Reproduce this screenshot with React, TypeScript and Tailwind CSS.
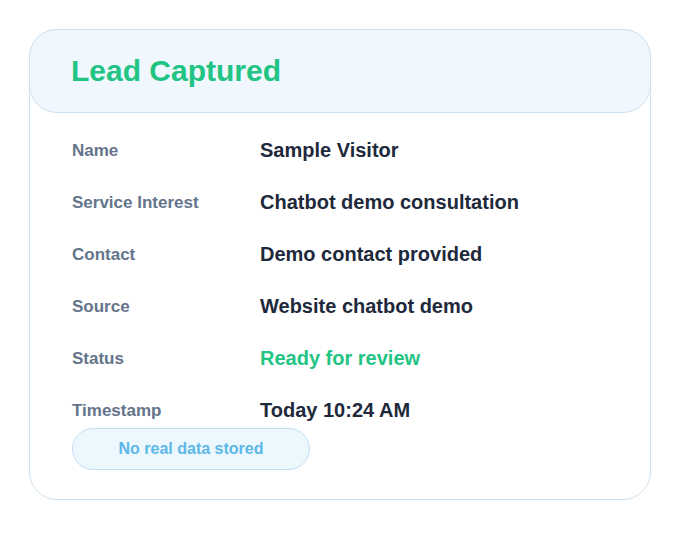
const rows: { label: string; value: string; accent?: boolean }[] = [
  { label: 'Name', value: 'Sample Visitor' },
  { label: 'Service Interest', value: 'Chatbot demo consultation' },
  { label: 'Contact', value: 'Demo contact provided' },
  { label: 'Source', value: 'Website chatbot demo' },
  { label: 'Status', value: 'Ready for review', accent: true },
  { label: 'Timestamp', value: 'Today 10:24 AM' },
];

export default function App() {
  return (
    <div
      className="min-h-[540px] bg-white p-[29px]"
      style={{ fontFamily: '"Liberation Sans", Arial, sans-serif' }}
    >
      <div className="rounded-[28px] border border-[#cde2f2] bg-white">
        {/* Title bar */}
        <div className="-mx-px -mt-px flex h-[84px] items-center rounded-[28px] border border-[#cde2f2] bg-[#f0f7fe] pl-[41px]">
          <h1 className="text-[30px] font-bold leading-none text-[#22c483]">Lead Captured</h1>
        </div>

        {/* Lead details */}
        <div className="pl-[42px] pr-[41px] pt-[23px] pb-[29px]">
          <div className="flex flex-col gap-[24px]">
            {rows.map((row) => (
              <div key={row.label} className="flex h-[28px] items-center">
                <span className="mt-[2px] w-[188px] shrink-0 text-[17px] font-semibold text-[#64748b]">
                  {row.label}
                </span>
                <span
                  className={`text-[20px] font-bold ${row.accent ? 'text-[#22c483]' : 'text-[#1e293b]'}`}
                >
                  {row.value}
                </span>
              </div>
            ))}
          </div>
          <div className="mt-[4px] flex h-[42px] w-[238px] items-center justify-center rounded-full border border-[#c4e0f3] bg-[#ecf7fe] text-[16px] font-semibold text-[#5cb8e8]">
            No real data stored
          </div>
        </div>
      </div>
    </div>
  );
}
